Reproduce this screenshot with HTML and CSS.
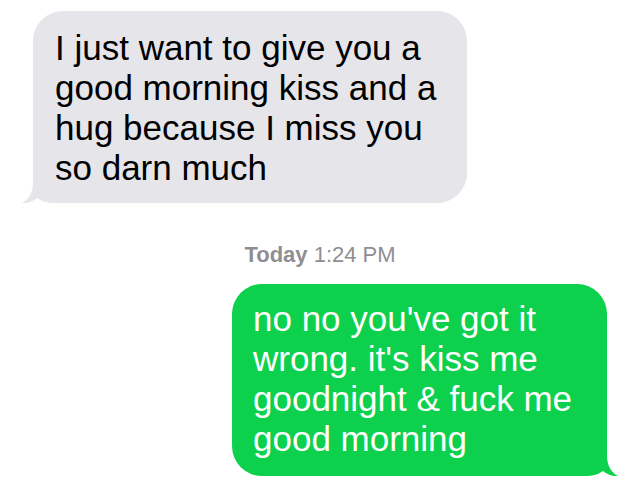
FILE: index.html
```html
<!DOCTYPE html>
<html lang="en">

<head>
    <meta charset="UTF-8">
    <meta name="viewport" content="width=device-width, initial-scale=1.0">
    <title>Messages</title>
    <link rel="stylesheet" href="styles.css">
</head>

<body>
    <div class="thread">
        <div class="bubble received">
            I just want to give you a<br>
            good morning kiss and a<br>
            hug because I miss you<br>
            so darn much
            <svg class="tail tail-left" width="46" height="36" viewBox="0 0 46 36">
                <path d="M12 0 L12 16 C12 26 7 33 1 36 C6 36.5 11 35 16 31 C20 34 26 36 34 36 L46 36 L46 0 Z" />
            </svg>
        </div>

        <div class="timestamp"><b>Today</b> 1:24 PM</div>

        <div class="bubble sent">
            no no you've got it<br>
            wrong. it's kiss me<br>
            goodnight &amp; fuck me<br>
            good morning
            <svg class="tail tail-right" width="46" height="36" viewBox="0 0 46 36">
                <path d="M12 0 L12 16 C12 26 7 33 1 36 C6 36.5 11 35 16 31 C20 34 26 36 34 36 L46 36 L46 0 Z" />
            </svg>
        </div>
    </div>
</body>

</html>
```

FILE: styles.css
```css
body {
    margin: 0;
    background-color: #ffffff;
    font-family: 'Liberation Sans', Arial, sans-serif;
}

.thread {
    display: flex;
    flex-direction: column;
    padding: 11px 30px 0 33px;
}

.bubble {
    position: relative;
    isolation: isolate;
    box-sizing: border-box;
    font-size: 35px;
    line-height: 40px;
    white-space: nowrap;
    border-radius: 30px;
}

.received {
    width: 434px;
    padding: 17px 22px 15px 22px;
    background-color: #e5e5ea;
    color: #000000;
}

.sent {
    align-self: flex-end;
    width: 375px;
    margin-top: 16px;
    padding: 15px 22px 17px 21px;
    background-color: #0dd04d;
    color: #ffffff;
}

.timestamp {
    margin-top: 39px;
    font-size: 22px;
    line-height: 26px;
    color: #8e8e93;
    text-align: center;
}

/* tail sits under the text, over the bubble background */
.tail {
    position: absolute;
    bottom: 0;
    z-index: -1;
}

.tail-left {
    left: -12px;
    fill: #e5e5ea;
}

.tail-right {
    right: -12px;
    fill: #0dd04d;
    transform: scaleX(-1);
}
```
